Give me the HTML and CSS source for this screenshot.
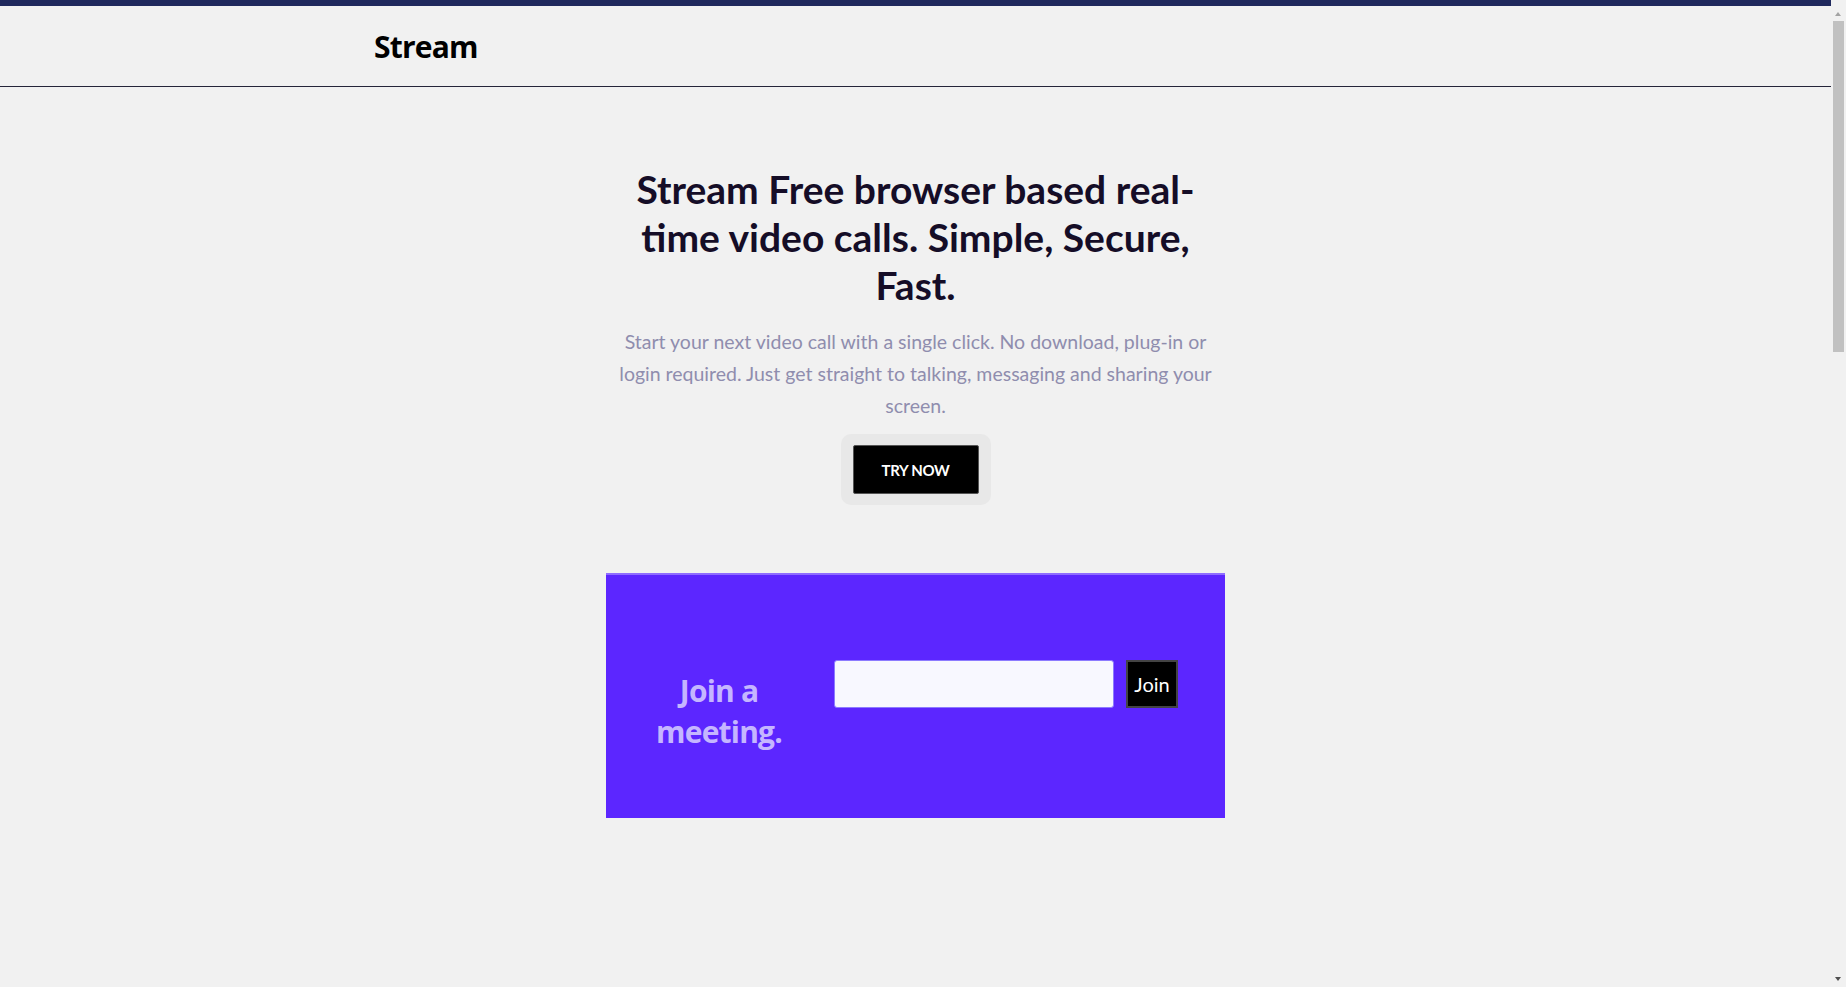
FILE: index.html
```html
<!DOCTYPE html>
<html lang="en">
<head>
<meta charset="utf-8">
<title>Stream</title>
<link rel="stylesheet" href="styles.css">
</head>
<body>
<div class="topbar"></div>
<header class="header">
  <div class="header-inner">
    <span class="logo">Stream</span>
  </div>
</header>
<main class="main">
  <section class="hero">
    <h1 class="hero-title">Stream Free browser based real-time video calls. Simple, Secure, Fast.</h1>
    <p class="hero-text">Start your next video call with a single click. No download, plug-in or login required. Just get straight to talking, messaging and sharing your screen.</p>
    <div class="cta-wrap">
      <button class="cta">TRY NOW</button>
    </div>
  </section>
  <section class="join-card">
    <h2 class="join-title">Join a meeting.</h2>
    <form class="join-form">
      <input class="join-input" type="text">
      <button class="join-btn" type="button">Join</button>
    </form>
  </section>
</main>
<div class="scrollbar" aria-hidden="true">
  <div class="sb-arrow sb-up"></div>
  <div class="sb-track"><div class="sb-thumb"></div></div>
  <div class="sb-arrow sb-down"></div>
</div>
</body>
</html>
```
FILE: styles.css
```css
html, body {
  margin: 0;
  padding: 0;
}
html {
  background: #f1f1f1;
}
body {
  margin-right: 15px;
  background: #f1f1f1;
  font-family: "Lato", "Liberation Sans", sans-serif;
  color: #150d27;
}
.topbar {
  height: 6px;
  background: #1f295d;
  margin-right: -15px;
}
.header {
  height: 80px;
  border-bottom: 1px solid #25253a;
}
.header-inner {
  height: 100%;
  display: flex;
  align-items: center;
  padding-left: 374px;
}
.logo {
  font-family: "Open Sans", "Noto Sans", sans-serif;
  font-weight: 700;
  font-size: 30px;
  letter-spacing: -0.8px;
  color: #000;
}
.main {
  min-height: 2760px;
  display: flex;
  flex-direction: column;
  align-items: center;
}
.hero {
  width: 600px;
  margin-top: 78px;
  display: flex;
  flex-direction: column;
  align-items: center;
  text-align: center;
}
.hero-title {
  margin: 0;
  font-family: "Lato", "Open Sans", sans-serif;
  font-weight: 700;
  font-size: 39px;
  line-height: 48px;
  color: #150d27;
  width: 580px;
}
.hero-text {
  margin: 17px 0 0;
  font-family: "Lato", sans-serif;
  font-size: 19.5px;
  line-height: 32px;
  color: #8f8dae;
}
.cta-wrap {
  margin-top: 12px;
  background: #e8e8e8;
  border-radius: 10px;
  padding: 11px 12px;
}
.cta {
  display: block;
  width: 126px;
  height: 49px;
  background: #000;
  color: #fff;
  border: 1px solid #555;
  border-radius: 2px;
  font-family: "Lato", sans-serif;
  font-weight: 700;
  font-size: 15px;
  letter-spacing: -0.3px;
  cursor: pointer;
}
.join-card {
  margin-top: 68px;
  width: 619px;
  height: 245px;
  box-sizing: border-box;
  background: #5c26ff;
  border-top: 2px solid #8f6cff;
  display: flex;
  align-items: flex-start;
  padding: 0 0 0 40px;
}
.join-title {
  margin: 95px 0 0;
  width: 146px;
  text-align: center;
  font-family: "Open Sans", "Noto Sans", sans-serif;
  font-weight: 700;
  font-size: 30px;
  line-height: 41px;
  letter-spacing: -0.8px;
  color: #c5b6ff;
}
.join-form {
  margin: 85px 0 0 42px;
  display: flex;
  gap: 12px;
}
.join-input {
  width: 280px;
  height: 48px;
  box-sizing: border-box;
  background: #f8f8ff;
  border: 1px solid #8d7bff;
  border-radius: 3px;
  margin: 0;
  padding: 0 10px;
}
.join-btn {
  width: 52px;
  height: 48px;
  box-sizing: border-box;
  background: #000;
  color: #fff;
  border: 2px solid #444;
  font-family: "Lato", sans-serif;
  font-size: 20px;
  padding: 0;
  margin: 0;
  cursor: pointer;
}
.scrollbar {
  position: fixed;
  top: 6px;
  right: 0;
  bottom: 0;
  width: 15px;
  background: #f1f1f1;
  display: flex;
  flex-direction: column;
}
.sb-arrow {
  height: 15px;
  position: relative;
  flex: none;
}
.sb-arrow::after {
  content: "";
  position: absolute;
  left: 4px;
  width: 0;
  height: 0;
  border-left: 3.5px solid transparent;
  border-right: 3.5px solid transparent;
}
.sb-up::after {
  top: 6px;
  border-bottom: 4px solid #a3a3a3;
}
.sb-down::after {
  top: 5px;
  border-top: 4px solid #505050;
}
.sb-track {
  flex: 1;
  padding: 0 2px;
}
.sb-thumb {
  height: 331px;
  background: #c1c1c1;
}
```
